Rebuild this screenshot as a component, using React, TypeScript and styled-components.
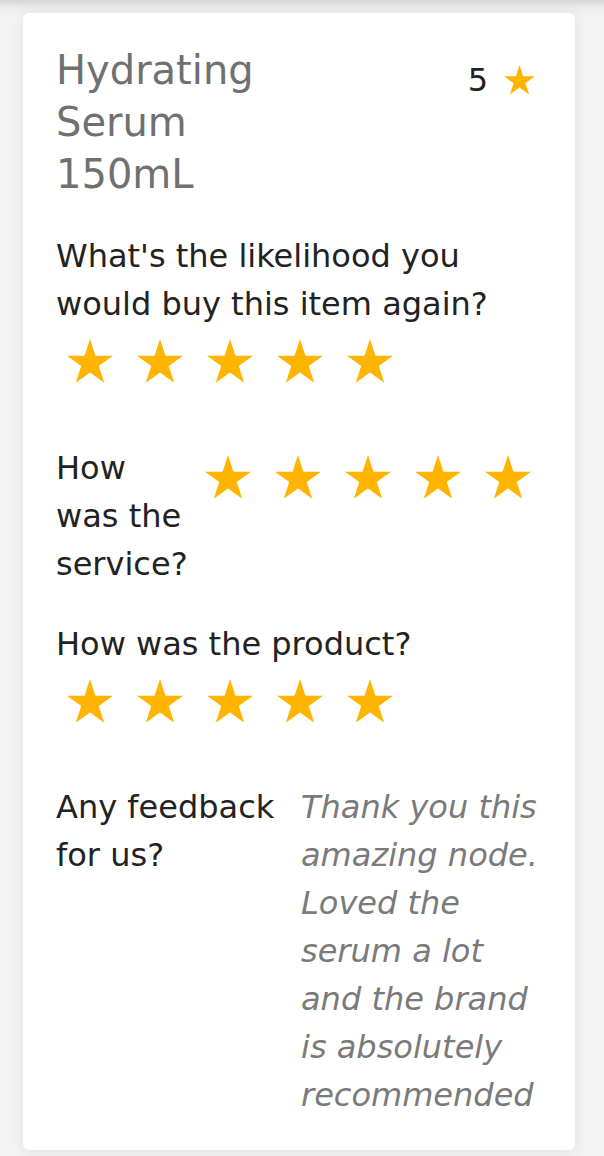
import React from "react";
import styled, { createGlobalStyle } from "styled-components";

const colors = {
    page: "#f3f3f3",
    card: "#ffffff",
    text: "#222222",
    muted: "#707070",
    note: "#7a7a7a",
    star: "#ffb400",
};

const GlobalStyle = createGlobalStyle`
    html, body {
        margin: 0;
        padding: 0;
        background: ${colors.page};
    }
    body {
        font-family: "DejaVu Sans", "Liberation Sans", sans-serif;
        color: ${colors.text};
    }
    * {
        box-sizing: border-box;
    }
`;

const Star = ({ size }: { size: number }) => (
    <svg width={size} height={size * 0.951} viewBox="0 0 100 95.1" aria-hidden="true">
        <polygon
            fill={colors.star}
            points="50,0 61.8,36.3 100,36.3 69.1,58.8 80.9,95.1 50,72.6 19.1,95.1 30.9,58.8 0,36.3 38.2,36.3"
        />
    </svg>
);

const StarRow = ({ count = 5, inline }: { count?: number; inline?: boolean }) => (
    <Stars inline={inline}>
        {Array.from({ length: count }).map((_, i) => (
            <StarCell key={i}>
                <Star size={46} />
            </StarCell>
        ))}
    </Stars>
);

export default function App() {
    return (
        <>
            <GlobalStyle />
            <Page>
                <Card>
                    <Header>
                        <Title>Hydrating Serum 150mL</Title>
                        <Score>
                            <span>5</span>
                            <Star size={31} />
                        </Score>
                    </Header>

                    <Question>
                        <Label>What's the likelihood you would buy this item again?</Label>
                        <StarRow />
                    </Question>

                    <Question inline>
                        <Label width={138}>How was the service?</Label>
                        <StarRow inline />
                    </Question>

                    <Question>
                        <Label>How was the product?</Label>
                        <StarRow />
                    </Question>

                    <Question inline>
                        <Label width={245}>Any feedback for us?</Label>
                        <Feedback>
                            Thank you this amazing node. Loved the serum a lot and the brand is absolutely
                            recommended
                        </Feedback>
                    </Question>
                </Card>
            </Page>
        </>
    );
}

const Page = styled.div`
    min-height: 1156px;
    padding: 13px 29px 6px 23px;
    background: linear-gradient(to bottom, #d6d6d6 0px, #ececec 8px, ${colors.page} 16px);
`;

const Card = styled.div`
    background: ${colors.card};
    border-radius: 6px;
    box-shadow: 0 2px 14px rgba(0, 0, 0, 0.08);
    padding: 31px 33px 31px 33px;
    display: flex;
    flex-direction: column;
    gap: 32px;
`;

const Header = styled.div`
    display: flex;
    justify-content: space-between;
    align-items: flex-start;
`;

const Title = styled.h1`
    margin: 0;
    width: 245px;
    font-size: 40px;
    line-height: 52px;
    font-weight: 400;
    color: ${colors.muted};
`;

const Score = styled.div`
    display: flex;
    align-items: center;
    gap: 16px;
    padding: 16px 7px 0 0;
    font-size: 32px;
    line-height: 40px;
    color: ${colors.text};
`;

const Question = styled.div<{ inline?: boolean }>`
    display: flex;
    flex-direction: ${(p) => (p.inline ? "row" : "column")};
    align-items: flex-start;
`;

const Label = styled.div<{ width?: number }>`
    flex: ${(p) => (p.width ? `0 0 ${p.width}px` : "none")};
    font-size: 32px;
    line-height: 48px;
`;

const Stars = styled.div<{ inline?: boolean }>`
    display: flex;
    margin-left: -1px;
    padding: ${(p) => (p.inline ? "11px 0 0" : "11px 0 29px")};
`;

const StarCell = styled.div`
    width: 70px;
    display: flex;
    justify-content: center;
`;

const Feedback = styled.p`
    margin: 0;
    flex: 1;
    font-size: 32px;
    line-height: 48px;
    font-style: italic;
    color: ${colors.note};
`;
